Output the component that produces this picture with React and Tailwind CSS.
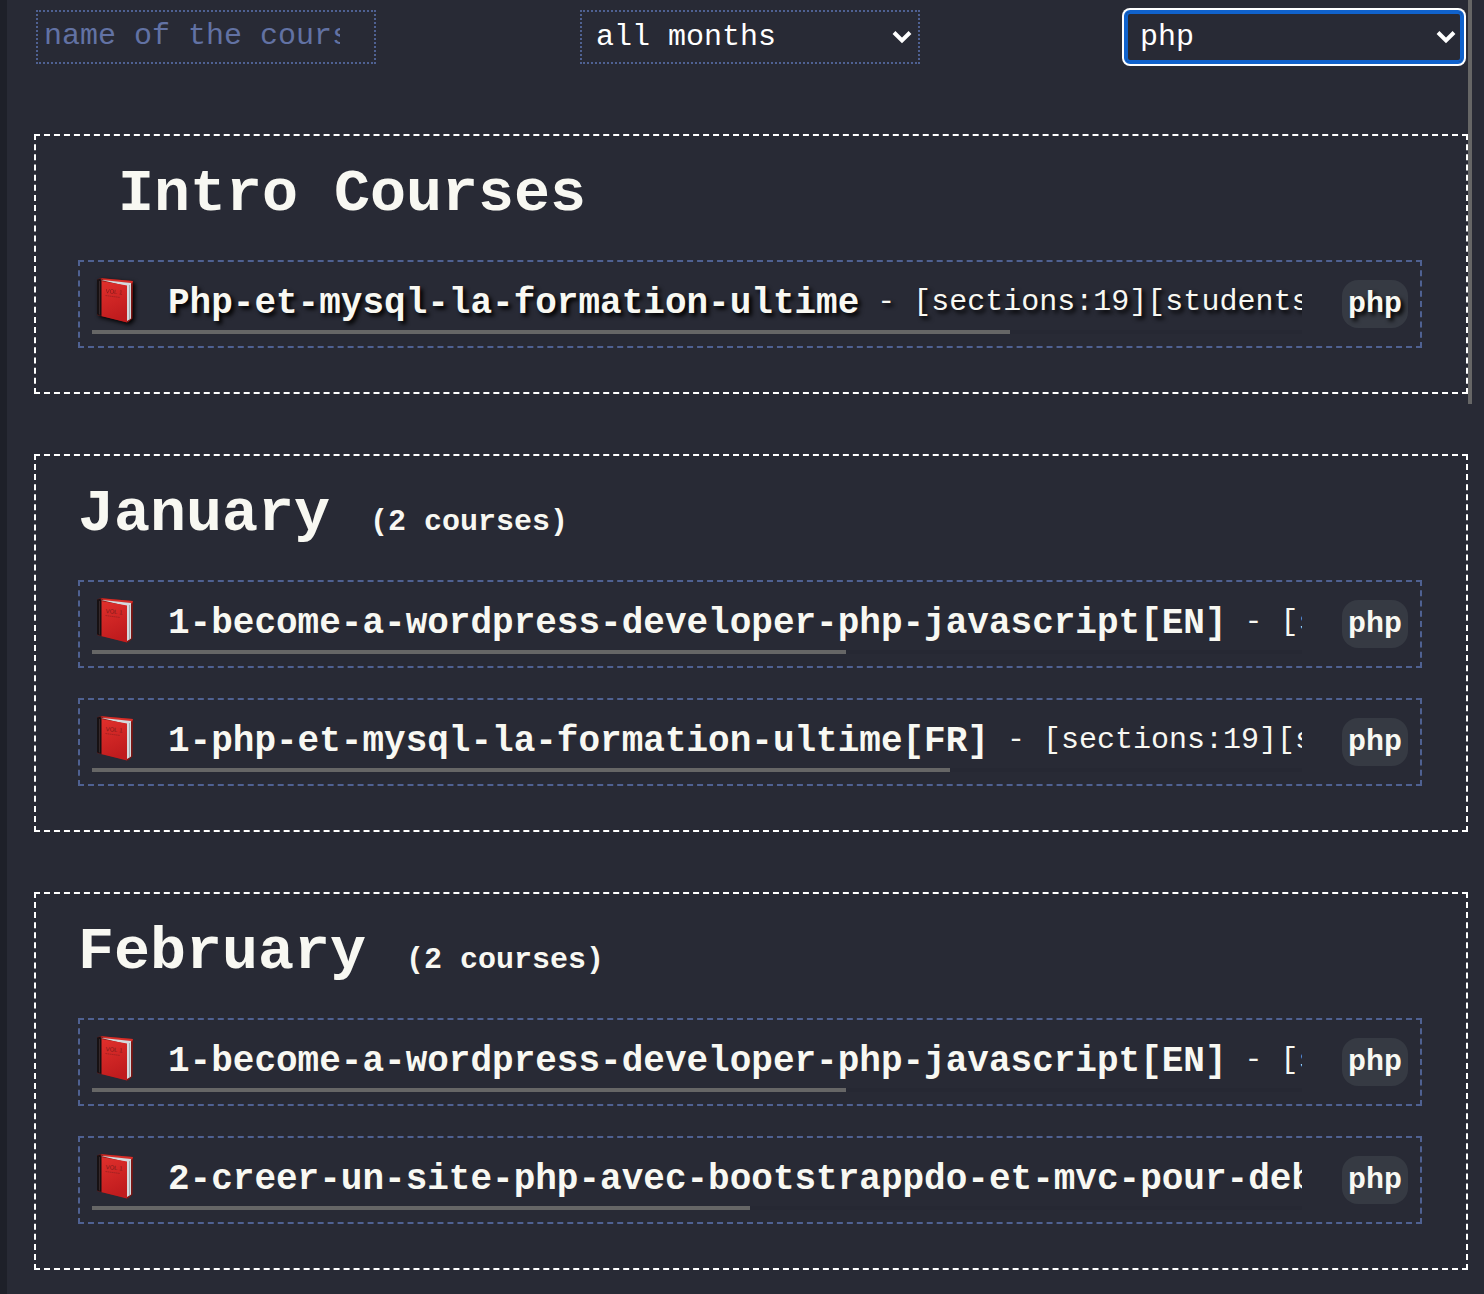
import React from "react";

const sections = [
  {
    title: "Intro Courses",
    intro: true,
    courses: [
      { name: "Php-et-mysql-la-formation-ultime", info: "[sections:19][students", width: "75.9%", active: true },
    ],
  },
  {
    title: "January",
    count: "(2 courses)",
    courses: [
      { name: "1-become-a-wordpress-developer-php-javascript[EN]", info: "[s", width: "62.3%" },
      { name: "1-php-et-mysql-la-formation-ultime[FR]", info: "[sections:19][s", width: "70.9%" },
    ],
  },
  {
    title: "February",
    count: "(2 courses)",
    courses: [
      { name: "1-become-a-wordpress-developer-php-javascript[EN]", info: "[s", width: "62.3%" },
      { name: "2-creer-un-site-php-avec-bootstrappdo-et-mvc-pour-deb", width: "54.4%" },
    ],
  },
];

function Book({ active }) {
  return (
    <svg
      viewBox="0 0 40 48"
      aria-hidden="true"
      className={
        active
          ? "ml-1 h-12 w-10 shrink-0 drop-shadow-[2px_2px_2px_#000000] [text-shadow:none]"
          : "ml-1 h-12 w-10 shrink-0"
      }
    >
      <defs>
        <linearGradient id="cover" x1="0" y1="0" x2="0.3" y2="1">
          <stop offset="0" stopColor="#e0302c" />
          <stop offset="1" stopColor="#c01c1e" />
        </linearGradient>
      </defs>
      <path d="M1 1.500 L5 0 L37 3 L36.500 40.500 L32 44.500 L1 37Z" fill="#7c1715" />
      <path d="M5 0.300 L37 3 L36 5.500 L8 2.500Z" fill="#d62f2a" />
      <path d="M4 1.800 L35 5 L35 40.500 L31 43 L30 8Z" fill="#d4dadd" />
      <path d="M33.500 7 V41" stroke="#8e979c" strokeWidth="0.700" />
      <path d="M5 3 L31 7.500 L31 44.500 L5 38Z" fill="url(#cover)" />
      <path d="M1 1.500 L4.500 0.800 L5.500 3.500 L5.500 38 L1 36.500Z" fill="#171113" />
      <path d="M3.500 3 V36.500" stroke="#4b3a3a" strokeWidth="0.600" />
      <text x="9.500" y="15" fontSize="6" fontFamily="Liberation Sans, sans-serif" fill="#7a1a1a" transform="rotate(6 10 15)">
        VOL 1
      </text>
      <path d="M9.500 17.500 L24 19.500" stroke="#98201f" strokeWidth="0.800" strokeDasharray="1.500 0.500" />
    </svg>
  );
}

function Course({ name, info, width, active }) {
  return (
    <li
      className={
        active
          ? "flex items-center gap-10 border-2 border-dashed border-[#4f6192] p-3 [text-shadow:3px_3px_4px_#000000]"
          : "flex items-center gap-10 border-2 border-dashed border-[#4f6192] p-3"
      }
    >
      <div className="min-w-0 flex-1 overflow-hidden">
        <div className="flex h-14 items-center whitespace-nowrap">
          <Book active={active} />
          <span className="ml-8 pt-1 text-4xl font-bold">{name}</span>
          {info && <span className="text-[30px] whitespace-pre"> - {info}</span>}
        </div>
        <div className="h-1 bg-[#262833]">
          <div className="h-1 bg-[#666666]" style={{ width }} />
        </div>
      </div>
      <span className="flex h-12 shrink-0 items-center rounded-2xl bg-[#363a43] px-1.5 text-[30px] font-bold">php</span>
    </li>
  );
}

function Chevron() {
  return (
    <svg viewBox="0 0 20 14" aria-hidden="true" className="pointer-events-none absolute top-5 right-2 h-3.5 w-5">
      <path d="M2 2.500 L10 10.500 L18 2.500" fill="none" stroke="#ffffff" strokeWidth="4" />
    </svg>
  );
}

export default function App() {
  return (
    <div className="relative flex min-h-screen bg-[#282a35] font-['Liberation_Mono',monospace] text-[#f8f8f2]">
      <div className="w-[7px] shrink-0 bg-[#1e2029]" />
      <main className="min-w-0 flex-1 pt-2.5 pr-4 pb-5 pl-[27px]">
        <form className="flex justify-between pr-1 pl-0.5">
          <input
            type="text"
            aria-label="Course name"
            placeholder="name of the course"
            className="h-[54px] w-[340px] border-2 border-dotted border-[#4f6192] pr-[34px] pb-0.5 pl-1.5 text-[30px] outline-none placeholder:text-[#6272a4]"
          />
          <div className="relative">
            <select
              aria-label="Month"
              className="h-[54px] w-[340px] appearance-none border-2 border-dotted border-[#4f6192] bg-[#282a35] px-3.5 text-[30px] text-white outline-none"
            >
              <option>all months</option>
            </select>
            <Chevron />
          </div>
          <div className="relative">
            <select
              aria-label="Language"
              className="h-[54px] w-[340px] appearance-none rounded-md border-2 border-[#1062cc] bg-[#282a35] px-3.5 text-[30px] text-white shadow-[0_0_0_2px_#ffffff,inset_0_0_0_2px_#1062cc] outline-none"
            >
              <option>php</option>
            </select>
            <Chevron />
          </div>
        </form>
        <div className="mt-[70px] flex flex-col gap-[60px]">
          {sections.map((s) => (
            <section key={s.title} className="border-2 border-dashed border-white pt-6 pr-11 pb-11 pl-[42px]">
              <h2
                className={
                  s.intro
                    ? "pl-10 text-[60px] leading-[68px] font-bold"
                    : "text-[60px] leading-[68px] font-bold"
                }
              >
                {s.title}
                {s.count && <span className="ml-10 text-[30px] leading-none">{s.count}</span>}
              </h2>
              <ul className="mt-8 flex flex-col gap-[30px]">
                {s.courses.map((c) => (
                  <Course key={c.name} {...c} />
                ))}
              </ul>
            </section>
          ))}
        </div>
      </main>
      <div className="absolute top-0 right-3 h-[404px] w-1 bg-[#666666]" />
    </div>
  );
}
